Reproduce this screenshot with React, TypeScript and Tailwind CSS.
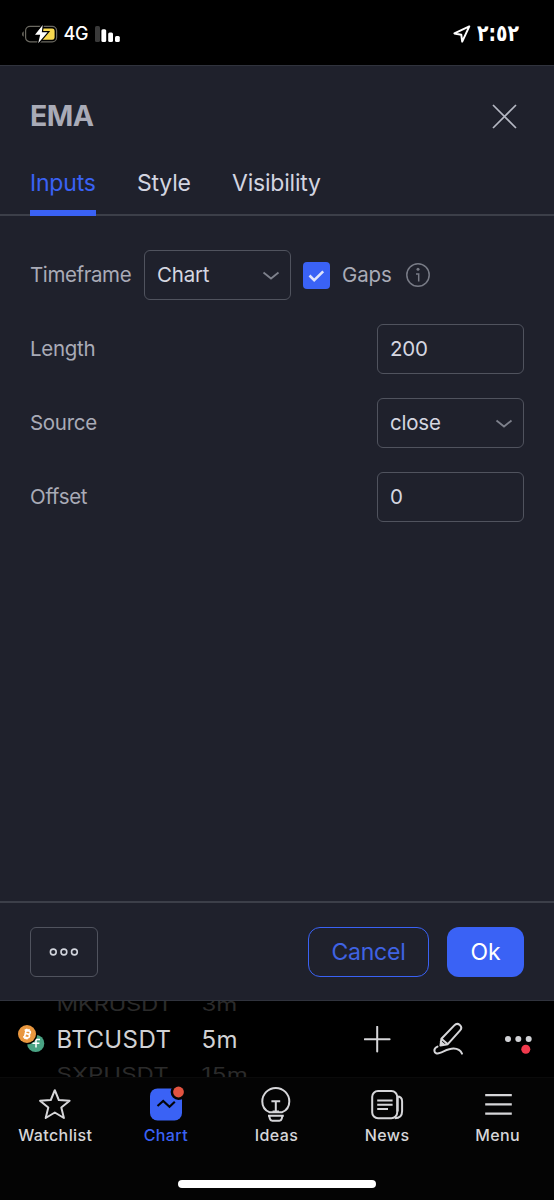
import * as React from "react";
import clsx from "clsx";

const StatusBar = () => (
  <div className="flex h-[65px] shrink-0 items-center justify-between bg-black pt-0.5 pr-[36px] pl-[21px] text-white">
    <div className="flex items-center">
      <svg width="37" height="20" viewBox="0 0 37 20" fill="none">
        <path d="M2.6 7.2C.6 8.4.6 11.6 2.6 12.8Z" fill="#77746a" />
        <rect x="4.6" y="2.4" width="31" height="15.4" rx="4.4" stroke="#6b6961" strokeWidth="1.2" />
        <path d="M19 4.4h12.2a2.4 2.4 0 0 1 2.4 2.4v6.6a2.4 2.4 0 0 1-2.4 2.4H19z" fill="#f8d94f" />
        <path
          d="M21.7 1 14 10.8h5.2l-2 8.4L26.6 8.2h-5.8z"
          fill="#fff"
          stroke="#000"
          strokeWidth="2.4"
          paintOrder="stroke"
        />
      </svg>
      <span className="mt-px ml-[5.5px] w-[25.5px] text-[18px] leading-none font-medium tracking-[-0.3px]">
        4G
      </span>
      <svg className="ml-[6px]" width="27" height="18" viewBox="0 0 27 18">
        <rect x="0" y="1" width="5" height="16" rx="1.6" fill="#3a3a3a" />
        <rect x="6.4" y="4.2" width="4.8" height="12.8" rx="1.5" fill="#fff" />
        <rect x="13.2" y="7.6" width="4.8" height="9.4" rx="1.5" fill="#fff" />
        <rect x="20" y="11" width="4.8" height="6" rx="1.5" fill="#fff" />
      </svg>
    </div>
    <div className="flex items-center">
      <svg width="18" height="18" viewBox="0 0 18 18" fill="none">
        <path d="M16.3 1.4 1.4 8.4l6.9 1.4.9 6.8z" stroke="#fff" strokeWidth="2" strokeLinejoin="round" />
      </svg>
      <span className="ml-[6px] w-[41px] origin-left scale-x-[0.82] font-['DejaVu_Sans',sans-serif] text-[23px] leading-none font-bold whitespace-nowrap">
        ٢:٥٢
      </span>
    </div>
  </div>
);

const tabs = [
  { label: "Inputs", active: true, width: "w-[66px]" },
  { label: "Style", active: false, width: "w-[54px]" },
  { label: "Visibility", active: false, width: "w-[89px]" },
];

const Tabs = () => (
  <div className="flex h-[71px] gap-[41px] border-b-2 border-[#3c3f49] px-[30px]">
    {tabs.map((tab) => (
      <div
        key={tab.label}
        className={clsx(
          "flex h-[71px] flex-col justify-between pt-[24px] text-[23px] leading-7 tracking-[-0.2px] whitespace-nowrap",
          tab.width,
          tab.active ? "text-[#3a62f5]" : "text-[#d3d5e0]",
        )}
      >
        <span>{tab.label}</span>
        {tab.active && <div className="h-[6px] bg-[#3a62f5]" />}
      </div>
    ))}
  </div>
);

const Chevron = () => (
  <svg className="mt-[2px]" width="18" height="10" viewBox="0 0 18 10" fill="none">
    <path d="m1.5 1.5 7.5 6 7.5-6" stroke="#7e818c" strokeWidth="1.8" />
  </svg>
);

const Field = ({ value, select }: { value: string; select?: boolean }) => (
  <div className="flex h-[50px] w-[147px] items-center justify-between rounded-[6px] border border-[#50535e] pr-[10px] pl-[12px] text-[20.5px] text-[#d5d7e1]">
    <span className="tracking-[-0.2px]">{value}</span>
    {select && <Chevron />}
  </div>
);

const Row = ({ label, children }: { label: string; children: React.ReactNode }) => (
  <div className="flex items-center justify-between">
    <span className="text-[20.5px] tracking-[-0.3px]">{label}</span>
    {children}
  </div>
);

const Dialog = () => (
  <div className="flex h-[936px] shrink-0 flex-col border-y border-[#30333d] bg-[#1f212c] text-[#a9abb7]">
    <div className="flex h-[79px] items-end justify-between pr-[37px] pb-[9px] pl-[30px]">
      <h1 className="text-[28.5px] leading-10 font-bold tracking-[-0.5px]">EMA</h1>
      <svg className="mb-[7.5px]" width="25" height="25" viewBox="0 0 25 25">
        <path d="m1 1 23 23M24 1 1 24" stroke="#b5b8c3" strokeWidth="1.7" />
      </svg>
    </div>
    <Tabs />
    <div className="flex grow flex-col gap-6 px-[30px] pt-[34px]">
      <div className="flex h-[50px] items-center">
        <span className="w-[114px] text-[20.5px] tracking-[-0.4px]">Timeframe</span>
        <Field value="Chart" select />
        <div className="mt-px ml-[12px] flex size-[27px] items-center justify-center rounded-[4px] bg-[#3a62f5]">
          <svg width="17" height="14" viewBox="0 0 17 14" fill="none">
            <path d="m1.5 6.5 4.7 4.7 9-8.8" stroke="#dfe4fb" strokeWidth="2.6" />
          </svg>
        </div>
        <span className="ml-[12px] w-[64px] text-[20.5px] tracking-[-0.1px]">Gaps</span>
        <svg width="24" height="24" viewBox="0 0 24 24" fill="none" stroke="#787b86" strokeWidth="1.5">
          <circle cx="12" cy="12" r="11.2" />
          <path d="M10 11h2.7v7.5" />
          <circle cx="12" cy="6.3" r="1.5" fill="#787b86" stroke="none" />
        </svg>
      </div>
      <Row label="Length">
        <Field value="200" />
      </Row>
      <Row label="Source">
        <Field value="close" select />
      </Row>
      <Row label="Offset">
        <Field value="0" />
      </Row>
    </div>
    <div className="flex h-[99px] items-center border-t-2 border-[#3c3f49] px-[30px] text-[23px]">
      <button className="flex h-[50px] w-[68px] items-center justify-center rounded-[6px] border border-[#50535e]">
        <svg width="30" height="8" viewBox="0 0 30 8" fill="none" stroke="#d1d4dc" strokeWidth="1.6">
          <circle cx="4.3" cy="4" r="2.9" />
          <circle cx="14.9" cy="4" r="2.9" />
          <circle cx="25.4" cy="4" r="2.9" />
        </svg>
      </button>
      <button className="ml-auto h-[50px] w-[121px] rounded-[12px] border border-[#3a62f5] pt-0.5 tracking-[-0.2px] text-[#3f63e4]">
        Cancel
      </button>
      <button className="ml-[18px] h-[50px] w-[77px] rounded-[12px] bg-[#3a62f5] pt-0.5 text-white">Ok</button>
    </div>
  </div>
);

const PairIcon = () => (
  <svg width="28" height="28" viewBox="0 0 28 28">
    <circle cx="17.7" cy="18.4" r="8.6" fill="#4aa384" />
    <path d="M14 14.6h8M18 14.6v8M14.4 18.3h7" stroke="#fff" strokeWidth="1.5" />
    <circle cx="9" cy="9" r="10.4" fill="#000" />
    <circle cx="9" cy="9" r="9" fill="#e9973f" />
    <g transform="rotate(13 9 9)" fill="none" stroke="#fff" strokeWidth="1.7">
      <path d="M5.8 5.5h4.4a1.7 1.7 0 0 1 0 3.4H7.3h3.2a1.9 1.9 0 0 1 0 3.7H5.8M7.3 5.5v7M8 3.8v1.7M10 3.8v1.7M8 12.6v1.7M10 12.6v1.7" />
    </g>
  </svg>
);

// The rows above and below the current one are half hidden, as on a wheel
const SymbolBar = () => (
  <div className="flex h-[76px] shrink-0 overflow-hidden bg-black pr-[20px] pl-[18px] text-[#d0d1d4]">
    <div className="mt-[24px] w-[38.5px]">
      <PairIcon />
    </div>
    <div className="flex w-[145px] flex-col text-[24px] leading-9">
      <span className="-mt-[14px] h-[34px] origin-left scale-y-75 tracking-[-0.4px] text-[#2b2b2b]">MKRUSDT</span>
      <span className="mt-px h-[36px] tracking-[0.4px]">BTCUSDT</span>
      <span className="-mt-px origin-left scale-y-75 text-[#2b2b2b]">SXPUSDT</span>
    </div>
    <div className="flex flex-col text-[24px] leading-9">
      <span className="-mt-[14px] h-[34px] origin-left scale-y-75 text-[#2b2b2b]">3m</span>
      <span className="mt-px h-[36px] tracking-[0.4px]">5m</span>
      <span className="-mt-px origin-left scale-y-75 tracking-[0.5px] text-[#2b2b2b]">15m</span>
    </div>
    <div className="ml-auto flex items-start">
      <svg className="mt-[25px]" width="27" height="27" viewBox="0 0 27 27">
        <path d="M13.2.8v24.8M.8 13.2h24.8" stroke="#d6d6d9" strokeWidth="2" strokeLinecap="round" />
      </svg>
      <svg
        className="mt-[20.5px] ml-[42px]"
        width="32"
        height="36"
        viewBox="0 0 32 36"
        fill="none"
        stroke="#d6d6d9"
        strokeWidth="2"
        strokeLinecap="round"
        strokeLinejoin="round"
      >
        <path d="m8.4 16.8 12.9-13.4c1.7-1.8 3.9-1.8 5.5-.4 1.8 1.6 1.9 3.6.3 5.4L14.8 22.2l-7.4 1.4zM8.4 16.8l6.4 5.4M7.8 19.6l3.4 3.4" />
        <path d="M4.5 24.6c-2 .8-3.3 2.4-3.1 4.3.2 2.3 2.6 3.2 5.5 2 4.8-1.8 8.9-4.4 13.7-4.3 4.1.1 7.1 2 8.4 5" />
      </svg>
      <svg className="mt-[34px] ml-[39px]" width="30" height="22" viewBox="0 0 30 22" fill="#d1d2d6">
        <circle cx="4" cy="4" r="3" />
        <circle cx="14.3" cy="4" r="3" />
        <circle cx="24.7" cy="4" r="3" />
        <circle cx="21.8" cy="14.3" r="4.5" fill="#f23a4d" />
      </svg>
    </div>
  </div>
);

const StarIcon = () => (
  <svg width="36" height="36" viewBox="0 0 36 36" fill="none">
    <path
      d="m17.8 4.2 4 9.8 10.8.8-8.3 6.8 2.6 10.4-9.1-5.5L8.7 32l2.6-10.4L3 14.8l10.8-.8z"
      stroke="#d6d6d9"
      strokeWidth="2"
      strokeLinejoin="round"
    />
  </svg>
);

const ChartIcon = () => (
  <svg width="36" height="36" viewBox="0 0 36 36" fill="none">
    <rect x="2" y="2.4" width="32" height="32" rx="7.5" fill="#3a62f5" />
    <path d="m9.5 20 5.7-5.1 6.3 5.9 5.3-5.1" stroke="#04050b" strokeWidth="2.1" />
    <circle cx="30.5" cy="6" r="7.9" fill="#050505" />
    <circle cx="30.5" cy="6" r="5.4" fill="#e25340" />
  </svg>
);

const IdeasIcon = () => (
  <svg width="36" height="38" viewBox="0 0 36 38" fill="none" stroke="#d6d6d9" strokeWidth="2">
    <path d="M11.4 26.2C7 24.2 4.3 20.3 4.3 15.4a13.5 13.5 0 1 1 27 0c0 4.9-2.7 8.8-7.1 10.8z" />
    <path d="M13.4 15.2h8.8M17.8 15.2v10.4M14.6 25.4h6.4M10 29.8h15.8M11.2 30l.7 2.8c.3 1.3 1 1.9 2.3 1.9h7.2c1.3 0 2-.6 2.3-1.9l.7-2.8" />
  </svg>
);

const NewsIcon = () => (
  <svg width="36" height="36" viewBox="0 0 36 36" fill="none" stroke="#d6d6d9" strokeWidth="2">
    <rect x="3.2" y="5" width="25" height="27.2" rx="5.8" />
    <path d="M28.3 10.6c3.2 0 4.8 1.7 4.8 4.9v9.7c0 4.6-2.5 6.9-7.3 7M28.7 10.6V25.6" />
    <path d="M8.2 14.4h15.4M8.2 18.7h15.4M8.2 23h10.8" />
  </svg>
);

const MenuIcon = () => (
  <svg width="36" height="36" viewBox="0 0 36 36">
    <path d="M5.2 9.2h26.6M5.2 18.4h26.6M5.2 27.6h26.6" stroke="#d6d6d9" strokeWidth="2.2" />
  </svg>
);

const navItems = [
  { label: "Watchlist", icon: StarIcon },
  { label: "Chart", icon: ChartIcon, active: true },
  { label: "Ideas", icon: IdeasIcon },
  { label: "News", icon: NewsIcon },
  { label: "Menu", icon: MenuIcon },
];

const BottomNav = () => (
  <div className="flex grow flex-col items-center justify-between border-t border-[#0a0a0a] bg-[#040404] pt-[8px] pb-[12px]">
    <div className="grid w-[553px] grid-cols-5 self-start">
      {navItems.map(({ label, icon: Icon, active }) => (
        <div
          key={label}
          className={clsx(
            "flex flex-col items-center text-[16px] leading-5 font-medium tracking-[0.4px]",
            active ? "text-[#3a62f5]" : "text-[#d6d6d9]",
          )}
        >
          <div className="h-[39px]">
            <Icon />
          </div>
          {label}
        </div>
      ))}
    </div>
    <div className="h-[8px] w-[198px] rounded-full bg-white" />
  </div>
);

export default function App() {
  return (
    <div className="flex h-[1200px] w-[554px] flex-col overflow-hidden bg-black font-['Inter',sans-serif]">
      <StatusBar />
      <Dialog />
      <SymbolBar />
      <BottomNav />
    </div>
  );
}
